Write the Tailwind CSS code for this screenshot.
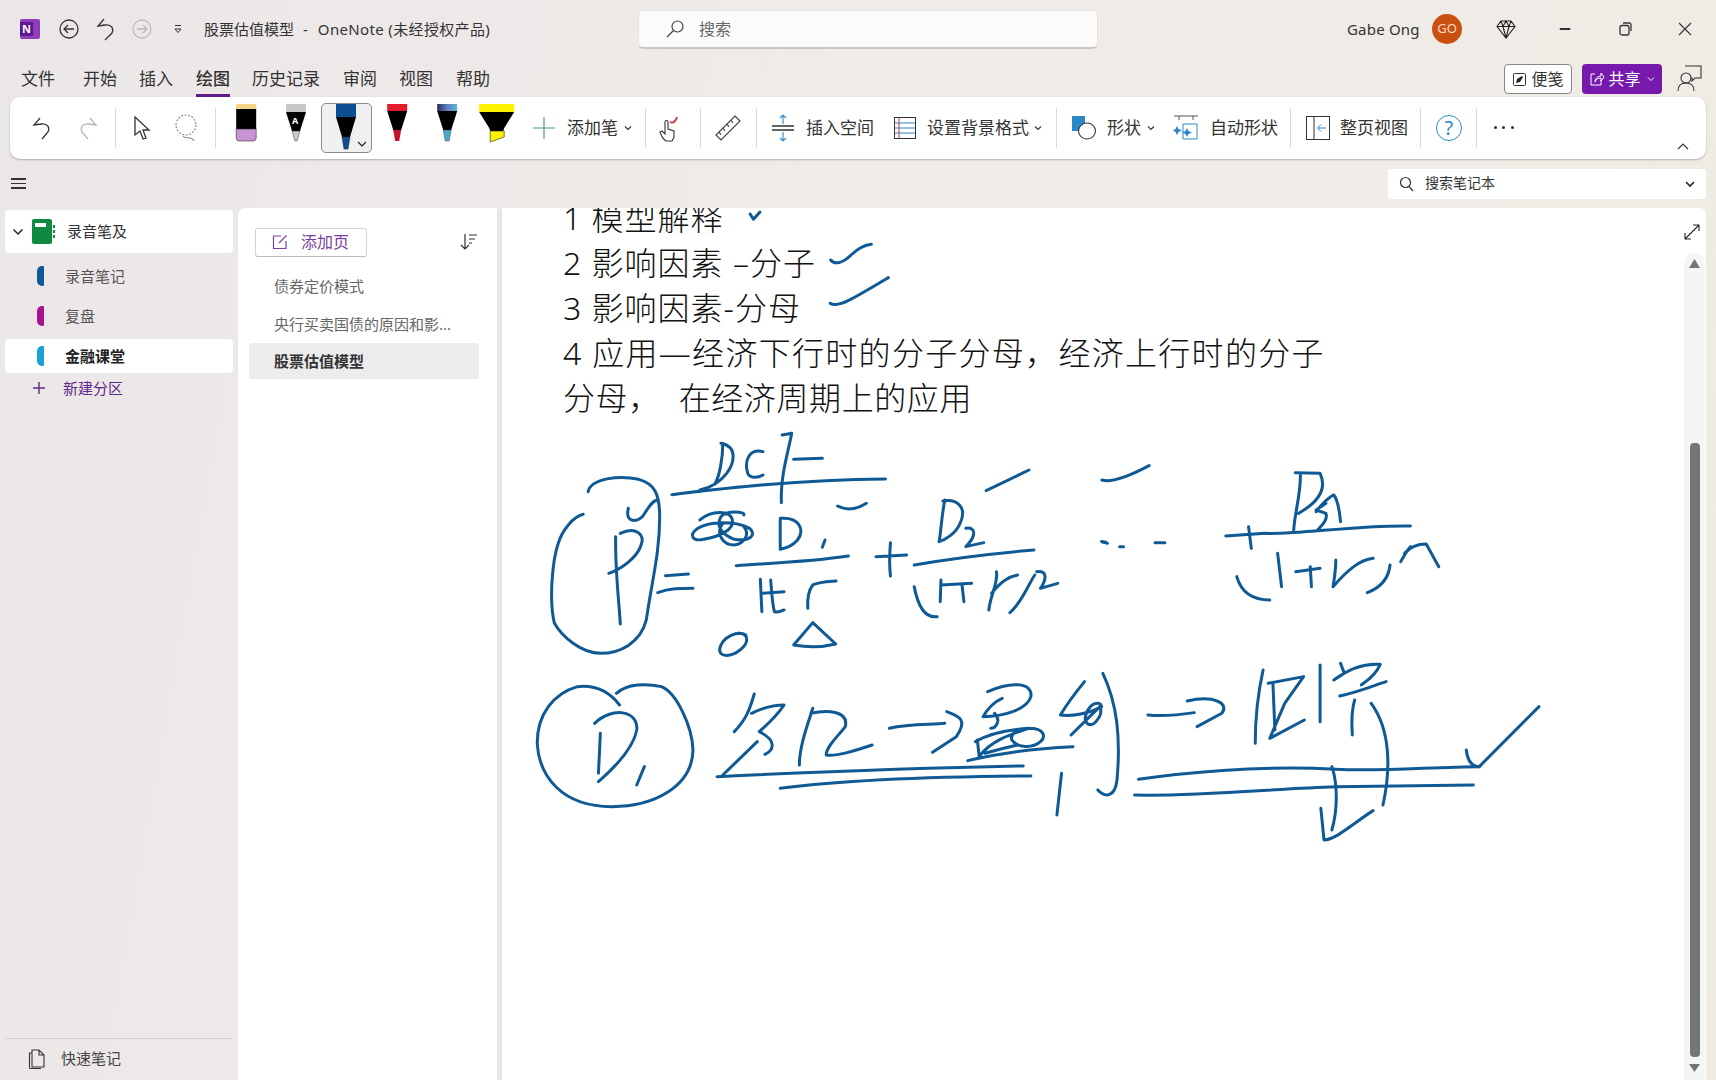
<!DOCTYPE html>
<html lang="zh-CN">
<head>
<meta charset="UTF-8">
<title>股票估值模型 - OneNote</title>
<script src="https://cdn.jsdelivr.net/npm/@tailwindcss/browser@4"></script>
</head>
<body class="m-0 overflow-hidden">
<div class="w-[1716px] h-[1080px] flex flex-col overflow-hidden text-[#333] bg-[linear-gradient(100deg,#ebe7e8_0%,#f0ebe8_45%,#efebe4_100%)] font-['Noto_Sans','Noto_Sans_CJK_SC',sans-serif]">

  <!-- title bar -->
  <div class="h-[58px] shrink-0 flex items-center">
    <div class="ml-[20px] w-[20px] h-[20px] relative bg-[#8f3dbb] rounded-[2px] shrink-0">
      <div class="absolute left-0 top-[3px] w-[13px] h-[14px] bg-[#5b1a92] text-white text-[11px] leading-[14px] font-bold text-center">N</div>
    </div>
    <svg class="ml-[19px] w-[20px] h-[20px] shrink-0" viewBox="0 0 20 20" fill="none" stroke="#333" stroke-width="1.3"><circle cx="10" cy="10" r="9"/><path d="M15 10H5M9 6l-4 4 4 4"/></svg>
    <svg class="ml-[17px] w-[20px] h-[24px] shrink-0" viewBox="0 0 20 24" fill="none" stroke="#333" stroke-width="1.3"><path d="M8 2L2 9l7-1c7-1 9 4 7 8l-7 7"/></svg>
    <svg class="ml-[16px] w-[20px] h-[20px] shrink-0" viewBox="0 0 20 20" fill="none" stroke="#bbb" stroke-width="1.3"><circle cx="10" cy="10" r="9"/><path d="M5 10h10M11 6l4 4-4 4"/></svg>
    <svg class="ml-[21px] w-[10px] h-[10px] shrink-0" viewBox="0 0 10 10" fill="none" stroke="#333" stroke-width="1"><path d="M2 1.5h6"/><path d="M2 5h6L5 8.5z"/></svg>
    <div class="ml-[21px] w-[286px] shrink-0 text-[15px] whitespace-nowrap flex">
      <span>股票估值模型</span><span class="ml-[9px]">-</span><span class="ml-[10px] tracking-[0.35px]">OneNote (未经授权产品)</span>
    </div>
    <div class="ml-[148px] w-[460px] h-[39px] shrink-0 bg-[#fbfbfb] rounded-[5px] border border-[#e5e1df] border-b-[#c9c6c4] border-b-2 flex items-center">
      <svg class="ml-[26px] w-[20px] h-[20px] shrink-0" viewBox="0 0 20 20" fill="none" stroke="#444" stroke-width="1.2"><circle cx="12.5" cy="7.5" r="5.5"/><path d="M8.5 11.5L2 18"/></svg>
      <span class="ml-[14px] text-[16px] text-[#666]">搜索</span>
    </div>
    <div class="ml-[249px] w-[74px] shrink-0 text-[15px] tracking-[0.2px] whitespace-nowrap">Gabe Ong</div>
    <div class="ml-[11px] w-[30px] h-[30px] shrink-0 rounded-full bg-[#ca5010] text-[#f5d9c8] text-[13px] flex items-center justify-center">GO</div>
    <svg class="ml-[34px] w-[20px] h-[20px] shrink-0" viewBox="0 0 20 20" fill="none" stroke="#222" stroke-width="1.1"><path d="M5 2h10l4 5.5L10 19 1 7.5zM1 7.5h18M7 7.500L10 19l3-11.500M5 2l2 5.500L10 2l3 5.500L15 2"/></svg>
    <div class="ml-[42px] w-[14px] h-[2px] bg-[#333] shrink-0 scale-x-75"></div>
    <svg class="ml-[46px] w-[14px] h-[14px] shrink-0" viewBox="0 0 14 14" fill="none" stroke="#333" stroke-width="1.300"><rect x="2" y="3.500" width="9" height="9.500" rx="2"/><path d="M5 1h5.500A2 2 0 0 1 13 3v6"/></svg>
    <svg class="ml-[46px] w-[14px] h-[14px] shrink-0" viewBox="0 0 14 14" fill="none" stroke="#333" stroke-width="1.100"><path d="M1 1l12 12M13 1L1 13"/></svg>
  </div>

  <!-- tabs -->
  <div class="h-[39px] shrink-0 flex items-start pl-[21px] pt-[7px] text-[17px] leading-[28px] whitespace-nowrap relative">
    <span>文件</span>
    <span class="ml-[28px]">开始</span>
    <span class="ml-[22px]">插入</span>
    <span class="ml-[23px] font-medium border-b-[3px] border-[#5f1c8b] h-[32px]">绘图</span>
    <span class="ml-[22px]">历史记录</span>
    <span class="ml-[23px]">审阅</span>
    <span class="ml-[22px]">视图</span>
    <span class="ml-[23px]">帮助</span>
    <div class="ml-auto flex items-start -mt-[1px]">
      <div class="w-[68px] h-[30px] bg-white border border-[#8a8886] rounded-[4px] flex items-center justify-center gap-[4px] text-[16px]">
        <svg class="w-[15px] h-[15px]" viewBox="0 0 15 15"><rect x="1.500" y="1.500" width="12" height="12" rx="1" fill="none" stroke="#333"/><path d="M4 11l1-4 5-3 1 1-3 5z" fill="#222"/></svg>便笺
      </div>
      <div class="ml-[10px] w-[80px] h-[30px] bg-[#7719aa] rounded-[4px] text-white flex items-center justify-center gap-[3px] text-[16px]">
        <svg class="w-[16px] h-[16px]" viewBox="0 0 16 16" fill="none" stroke="#fff"><path d="M6 3H2v11h10V9M6 11c0-4 3-6 6-6V2l3 4-3 4V7c-3 0-5 1-6 4z"/></svg>共享
        <svg class="w-[8px] h-[8px] ml-[3px]" viewBox="0 0 8 8" fill="none" stroke="#fff"><path d="M1 2.500l3 3 3-3"/></svg>
      </div>
      <svg class="ml-[15px] mr-[13px] w-[26px] h-[28px]" viewBox="0 0 26 28" fill="none" stroke="#333" stroke-width="1.100"><path d="M8 2h16v12h-6l-3 3v-3h-1"/><circle cx="9" cy="14" r="5"/><path d="M1 27c0-5 3-8 8-8s8 3 8 8"/></svg>
    </div>
  </div>

  <!-- ribbon -->
  <div class="ml-[10px] w-[1696px] h-[62px] shrink-0 bg-white rounded-[10px] shadow-[0_1px_2px_rgba(0,0,0,0.25)] flex items-center relative text-[17px] whitespace-nowrap">
    <svg class="ml-[11px] w-[44px] h-[24px] shrink-0" viewBox="0 0 44 24" fill="none" stroke="#333" stroke-width="1.300"><path d="M19 2l-6 7 7-1c7-1 9 4 7 8l-6 7"/></svg>
    <svg class="w-[44px] h-[24px] shrink-0" viewBox="0 0 44 24" fill="none" stroke="#b5b5b5" stroke-width="1.300"><path d="M25 2l6 7-7-1c-7-1-9 4-7 8l6 7"/></svg>
    <div class="ml-[6px] w-px h-[40px] bg-[#d8d8d8] shrink-0"></div>
    <svg class="w-[50px] h-[26px] shrink-0" viewBox="0 0 50 26" fill="none" stroke="#333" stroke-width="1.300"><path d="M19 2v18l5-4 3 8 3-1-3-8h6z"/></svg>
    <svg class="w-[42px] h-[28px] shrink-0" viewBox="0 0 42 28" fill="none" stroke="#888" stroke-width="1.200" stroke-dasharray="2 1.500"><circle cx="20" cy="11" r="10"/><path d="M17 22c3 4 8-1 11 5" stroke-dasharray="none"/></svg>
    <div class="ml-[7px] w-px h-[40px] bg-[#d8d8d8] shrink-0"></div>

    <!-- pens -->
    <svg class="ml-[4.500px] w-[50.400px] h-[50px] shrink-0" viewBox="0 0 50 50"><rect x="15" y="1" width="20" height="6" fill="#f3d488"/><rect x="15" y="6" width="20" height="20" fill="#000"/><path d="M15 26h20v9a3 3 0 0 1-3 3H18a3 3 0 0 1-3-3z" fill="#c994d6" stroke="#333" stroke-width=".6"/></svg>
    <div class="w-[50.400px] h-[50px] shrink-0 relative">
      <svg class="w-[50px] h-[50px]" viewBox="0 0 50 50"><rect x="15" y="1" width="20" height="8" fill="#c9c7c7"/><path d="M15 9h20l-6 19h-8z" fill="#000"/><path d="M21 28h8l-3 10h-2z" fill="#c9c7c7" stroke="#333" stroke-width=".5"/></svg>
      <span class="absolute left-[21px] top-[13px] text-white text-[9px] leading-[10px] font-bold">A</span>
    </div>
    <div class="w-[50.400px] h-[50px] shrink-0 relative bg-[#f0f0f0] border border-[#8a8a8a] rounded-[5px] overflow-hidden">
      <svg class="absolute left-[-1px] top-[-1px] w-[50px] h-[50px]" viewBox="0 0 50 50"><rect x="15" y="1" width="20" height="13" fill="#0b4f92"/><path d="M15 14h20l-6 20h-8z" fill="#000"/><path d="M21 34h8l-2 12h-4z" fill="#0b4f92" stroke="#222" stroke-width=".5"/></svg>
      <svg class="absolute right-[4px] bottom-[4px] w-[10px] h-[8px]" viewBox="0 0 10 8" fill="none" stroke="#222" stroke-width="1.200"><path d="M1 2l4 4 4-4"/></svg>
    </div>
    <svg class="w-[50.400px] h-[50px] shrink-0" viewBox="0 0 50 50"><rect x="15" y="1" width="20" height="7" fill="#e21b2b"/><path d="M15 8h20l-6 19h-8z" fill="#000"/><path d="M21 27h8l-2 11h-4z" fill="#c8102e"/></svg>
    <svg class="w-[50.400px] h-[50px] shrink-0" viewBox="0 0 50 50"><defs><linearGradient id="cap" x1="0" x2="1"><stop offset="0" stop-color="#2a2a55"/><stop offset=".5" stop-color="#5b7fc4"/><stop offset="1" stop-color="#5fb7cf"/></linearGradient></defs><rect x="15" y="1" width="20" height="7" fill="url(#cap)"/><path d="M15 8h20l-6 19h-8z" fill="#000"/><path d="M21 27h8l-2 11h-4z" fill="#4ea9c8" stroke="#333" stroke-width=".4"/></svg>
    <svg class="w-[50.400px] h-[50px] shrink-0" viewBox="0 0 50 50"><rect x="7" y="1" width="35" height="8" fill="#fff200"/><path d="M7 9h35l-10 16-1 3h-13l-1-3z" fill="#000"/><path d="M18 28h14v6l-14 5z" fill="#fff200" stroke="#222" stroke-width=".6"/></svg>

    <svg class="ml-[10.100px] w-[22px] h-[22px] shrink-0" viewBox="0 0 22 22" stroke="#4ba36b" stroke-width="1.200"><path d="M11 0v22M0 11h22"/></svg>
    <span class="ml-[12px] w-[51px] shrink-0">添加笔</span>
    <svg class="ml-[6px] w-[8px] h-[8px] shrink-0" viewBox="0 0 8 8" fill="none" stroke="#333" stroke-width="1.100"><path d="M1 2.500l3 3 3-3"/></svg>
    <div class="ml-[13px] w-px h-[40px] bg-[#d8d8d8] shrink-0"></div>
    <svg class="w-[48px] h-[28px] shrink-0" viewBox="0 0 48 28" fill="none"><path d="M20 27c-3-2-5-6-6-9l2-1 3 3V8a1.500 1.500 0 0 1 3 0v7l6 2v6l-2 4z" stroke="#333" stroke-width="1.100"/><path d="M24 8c3 2 6-1 7-5" stroke="#c8323c" stroke-width="1.800"/></svg>
    <div class="ml-[6px] w-px h-[40px] bg-[#d8d8d8] shrink-0"></div>
    <svg class="w-[55px] h-[26px] shrink-0" viewBox="0 0 55 26" fill="none" stroke="#444" stroke-width="1.200"><path d="M34 1l5 5-19 19-5-5zM30 5l2 3M26 9l2 3M22 13l2 3M18 17l2 3"/></svg>
    <div class="w-px h-[40px] bg-[#d8d8d8] shrink-0"></div>
    <svg class="ml-[6px] w-[40px] h-[28px] shrink-0" viewBox="0 0 40 28" fill="none"><path d="M9 12h22M9 16h22" stroke="#333" stroke-width="1.600"/><path d="M20 10V1M17 4l3-3 3 3M20 18v9M17 24l3 3 3-3" stroke="#2b88c8" stroke-width="1.100"/></svg>
    <span class="ml-[3px] w-[68px] shrink-0">插入空间</span>
    <svg class="ml-[19px] w-[24px] h-[24px] shrink-0" viewBox="0 0 24 24" fill="none"><rect x="1.500" y="1.500" width="21" height="21" stroke="#333"/><path d="M2 7h20M2 12h20M2 17h20" stroke="#2b88c8"/><path d="M6 2v20" stroke="#c8323c"/></svg>
    <span class="ml-[10px] w-[102px] shrink-0">设置背景格式</span>
    <svg class="ml-[5px] w-[8px] h-[8px] shrink-0" viewBox="0 0 8 8" fill="none" stroke="#333" stroke-width="1.100"><path d="M1 2.500l3 3 3-3"/></svg>
    <div class="ml-[14px] w-px h-[40px] bg-[#d8d8d8] shrink-0"></div>
    <svg class="ml-[14px] w-[26px] h-[26px] shrink-0" viewBox="0 0 26 26" fill="none"><rect x="1" y="1" width="13" height="15" fill="#2b88c8"/><ellipse cx="16" cy="16" rx="8.500" ry="8" fill="#fff" stroke="#333" stroke-width="1.100"/></svg>
    <span class="ml-[10px] w-[34px] shrink-0">形状</span>
    <svg class="ml-[6px] w-[8px] h-[8px] shrink-0" viewBox="0 0 8 8" fill="none" stroke="#333" stroke-width="1.100"><path d="M1 2.500l3 3 3-3"/></svg>
    <svg class="ml-[18px] w-[26px] h-[26px] shrink-0" viewBox="0 0 26 26" fill="none"><path d="M1 1h24" stroke="#555"/><path d="M6 1v4M20 1v4" stroke="#555"/><path d="M10 9h14v15H10z" stroke="#2b88c8"/><path d="M4 11l1.500 3L9 15.500 5.500 17 4 20l-1.500-3L0 15.500 2.500 14zM14 13l1.500 3 3.500 1.500-3.500 1.500-1.500 3-1.500-3L9 17.500l3.500-1.500z" fill="#2b88c8"/></svg>
    <span class="ml-[11px] w-[68px] shrink-0">自动形状</span>
    <div class="ml-[12px] w-px h-[40px] bg-[#d8d8d8] shrink-0"></div>
    <svg class="ml-[15px] w-[24px] h-[24px] shrink-0" viewBox="0 0 24 24" fill="none"><rect x=".500" y=".500" width="23" height="23" stroke="#333"/><path d="M8 1v22" stroke="#333"/><path d="M20 12h-8M15 8.500L11.500 12l3.500 3.500" stroke="#2b88c8"/></svg>
    <span class="ml-[10px] w-[68px] shrink-0">整页视图</span>
    <div class="ml-[12px] w-px h-[40px] bg-[#d8d8d8] shrink-0"></div>
    <div class="ml-[15px] w-[26px] h-[26px] shrink-0 rounded-full border border-[#2b88c8] text-[#2b88c8] text-[20px] leading-[24px] text-center">?</div>
    <div class="ml-[14px] w-px h-[40px] bg-[#d8d8d8] shrink-0"></div>
    <div class="ml-[17px] w-[20px] shrink-0 flex justify-between -mt-[2px]">
      <i class="w-[3px] h-[3px] rounded-full bg-[#333]"></i><i class="w-[3px] h-[3px] rounded-full bg-[#333]"></i><i class="w-[3px] h-[3px] rounded-full bg-[#333]"></i>
    </div>
    <svg class="absolute right-[17px] bottom-[9px] w-[12px] h-[8px]" viewBox="0 0 12 8" fill="none" stroke="#333" stroke-width="1.100"><path d="M1 7l5-5 5 5"/></svg>
  </div>

  <!-- notebook search row -->
  <div class="h-[49px] shrink-0 flex items-center">
    <div class="ml-[11px] w-[15px] flex flex-col gap-[3px] shrink-0">
      <i class="h-[1.500px] bg-[#333]"></i><i class="h-[1.500px] bg-[#333]"></i><i class="h-[1.500px] bg-[#333]"></i>
    </div>
    <div class="ml-auto mr-[10px] w-[318px] h-[30px] bg-white rounded-[3px] flex items-center text-[14px]">
      <svg class="ml-[11px] w-[15px] h-[16px] shrink-0" viewBox="0 0 15 16" fill="none" stroke="#333" stroke-width="1.200"><circle cx="6.500" cy="6.500" r="5"/><path d="M10 10.500l4 4.500"/></svg>
      <span class="ml-[11px] -mt-[2px]">搜索笔记本</span>
      <svg class="ml-auto mr-[11px] w-[10px] h-[8px] shrink-0" viewBox="0 0 10 8" fill="none" stroke="#222" stroke-width="1.600"><path d="M1 2l4 4 4-4"/></svg>
    </div>
  </div>

  <!-- main -->
  <div class="flex-1 min-h-0 flex">
    <!-- sections -->
    <div class="w-[238px] shrink-0 flex flex-col text-[15px] pt-[2px]">
      <div class="ml-[5px] w-[228px] h-[43px] bg-white rounded-[4px] flex items-center">
        <svg class="ml-[7px] w-[12px] h-[8px] shrink-0" viewBox="0 0 12 8" fill="none" stroke="#222" stroke-width="1.500"><path d="M1.500 1.500L6 6l4.500-4.500"/></svg>
        <div class="ml-[8px] w-[23px] h-[25px] shrink-0 flex">
          <div class="w-[20px] h-[25px] bg-[#0e8a43] rounded-[2px] pt-[4px] pl-[3px]"><div class="w-[11px] h-[4px] bg-white"></div></div>
          <div class="ml-[1px] flex flex-col justify-center gap-[2px]"><i class="w-[2px] h-[3px] bg-[#0e8a43]"></i><i class="w-[2px] h-[3px] bg-[#0e8a43]"></i><i class="w-[2px] h-[3px] bg-[#0e8a43]"></i></div>
        </div>
        <span class="ml-[12px]">录音笔及</span>
      </div>
      <div class="mt-[3px] h-[40px] flex items-center">
        <div class="ml-[37px] w-[7px] h-[20px] bg-[#0f5a94] rounded-l-[5px] rounded-r-[1px] shrink-0"></div>
        <span class="ml-[21px] text-[#555]">录音笔记</span>
      </div>
      <div class="h-[40px] flex items-center">
        <div class="ml-[37px] w-[7px] h-[20px] bg-[#a6128f] rounded-l-[5px] rounded-r-[1px] shrink-0"></div>
        <span class="ml-[21px] text-[#555]">复盘</span>
      </div>
      <div class="mt-[3px] ml-[5px] w-[228px] h-[34px] bg-white rounded-[4px] flex items-center">
        <div class="ml-[32px] w-[7px] h-[20px] bg-[#1ba1d6] rounded-l-[5px] rounded-r-[1px] shrink-0"></div>
        <span class="ml-[21px] font-bold text-[#222]">金融课堂</span>
      </div>
      <div class="h-[30px] flex items-center text-[#5f2a8a]">
        <svg class="ml-[33px] w-[12px] h-[12px] shrink-0" viewBox="0 0 12 12" stroke="#5f2a8a" stroke-width="1.400"><path d="M6 0v12M0 6h12"/></svg>
        <span class="ml-[18px]">新建分区</span>
      </div>
      <div class="mt-auto mx-[5px] border-t border-[#d2cfcf] h-[42px] pb-[2px] flex items-center text-[#444]">
        <svg class="ml-[22px] w-[18px] h-[20px] shrink-0" viewBox="0 0 18 20" fill="none" stroke="#333" stroke-width="1.100"><path d="M5 1h7l5 5v12H5zM12 1v5h5M5 4H2.500v14.500A1 1 0 0 0 3.500 19.500H14"/></svg>
        <span class="ml-[16px]">快速笔记</span>
      </div>
    </div>

    <!-- pages -->
    <div class="w-[259px] shrink-0 bg-white rounded-tl-[8px] text-[15px]">
      <div class="h-[64px] flex items-center pt-[4px]">
        <div class="ml-[17px] w-[112px] h-[29px] bg-white rounded-[3px] border border-[#d5d3d1] border-b-[#bbb] flex items-center text-[#7a3f9e] text-[16px]">
          <svg class="ml-[16px] w-[16px] h-[16px] shrink-0" viewBox="0 0 16 16" fill="none" stroke="#7a3f9e" stroke-width="1.200"><path d="M9 2H1.500v12.500H14V7M14.500 1.500L7 9"/></svg>
          <span class="ml-[13px]">添加页</span>
        </div>
        <svg class="ml-[93px] w-[18px] h-[18px] shrink-0" viewBox="0 0 18 18" fill="none" stroke="#333" stroke-width="1.200"><path d="M5 1v15M1 12l4 4 4-4M9 2h8M9 6h6M9 10h3"/></svg>
      </div>
      <div class="-mt-[1px] h-[30px] pl-[36px] flex items-center text-[#666] whitespace-nowrap">债券定价模式</div>
      <div class="mt-[8px] h-[30px] pl-[36px] flex items-center text-[#666] whitespace-nowrap">央行买卖国债的原因和影...</div>
      <div class="mt-[4px] ml-[11px] w-[230px] h-[36px] bg-[#ececec] rounded-[3px] pl-[25px] flex items-center font-bold text-[#333]">股票估值模型</div>
    </div>
    <div class="mt-[4px] w-[5px] shrink-0 bg-[#e6e6e6]"></div>

    <!-- note canvas -->
    <div class="w-[1204px] shrink-0 bg-white rounded-tr-[6px] relative overflow-hidden">
      <div class="-mt-[13px] pl-[61px] pr-[280px] text-[32px] leading-[45px] text-[#111] font-light tracking-[1px]">
        <div>1 模型解释</div>
        <div>2 影响因素 –分子</div>
        <div>3 影响因素-分母</div>
        <div class="tracking-[1.300px]">4 应用—经济下行时的分子分母，经济上行时的分子</div>
        <div class="whitespace-pre tracking-[0.600px]">分母，  在经济周期上的应用</div>
      </div>

      <!-- ink, in page coordinates -->
      <svg class="absolute left-[-502px] top-[-208px] w-[1716px] h-[1080px] pointer-events-none" viewBox="0 0 1716 1080" fill="none" stroke="#0f5a94" stroke-linecap="round" stroke-linejoin="round">
        <g transform="translate(500 200) scale(.5485 .3333)" stroke-width="3">
          <path vector-effect="non-scaling-stroke" d="M456 42L462 58L474 36"/>
          <path vector-effect="non-scaling-stroke" d="M603 180C610 195 625 190 640 165C650 150 665 135 677 133"/>
          <path vector-effect="non-scaling-stroke" d="M602 310C615 325 640 300 708 233"/>
        </g>
        <g transform="translate(520 420) scale(.3827 .3333)" stroke-width="3">
          <path vector-effect="non-scaling-stroke" d="M178 215C185 175 260 165 310 178C350 190 365 220 365 290C365 400 345 480 330 600C315 670 260 700 210 700C160 700 110 650 90 610C75 540 85 420 100 370C110 330 140 290 165 283"/>
          <path vector-effect="non-scaling-stroke" d="M283 265C275 305 300 310 320 290C335 265 345 240 360 240"/>
          <path vector-effect="non-scaling-stroke" d="M250 350C248 450 260 560 262 612"/>
          <path vector-effect="non-scaling-stroke" d="M262 340C300 320 330 340 315 380C305 410 270 445 232 460"/>
          <path vector-effect="non-scaling-stroke" d="M380 467L440 462M360 518C390 505 420 505 452 505"/>
          <path vector-effect="non-scaling-stroke" d="M397 224C500 210 700 180 955 177"/>
          <path vector-effect="non-scaling-stroke" d="M530 70C530 120 520 170 510 190M525 70C570 80 560 130 540 160C520 190 490 205 470 210"/>
          <path vector-effect="non-scaling-stroke" d="M635 95C600 85 585 120 595 160C600 175 620 175 635 165"/>
          <path vector-effect="non-scaling-stroke" d="M685 45L710 40C700 100 680 170 683 248M715 118L790 115"/>
          <path vector-effect="non-scaling-stroke" d="M470 300C500 270 550 270 555 300C560 330 520 350 480 358C450 365 440 345 465 325C490 305 560 300 600 325C620 345 600 365 560 358C530 345 510 320 525 290C540 270 590 275 585 285M530 310C510 340 530 375 560 375C590 370 600 340 585 320"/>
          <path vector-effect="non-scaling-stroke" d="M680 300L680 385M680 295C730 290 745 330 725 360C710 380 695 385 680 388M797 360L790 382"/>
          <path vector-effect="non-scaling-stroke" d="M830 258C860 275 885 265 905 250"/>
          <path vector-effect="non-scaling-stroke" d="M565 437C650 430 760 425 858 408"/>
          <path vector-effect="non-scaling-stroke" d="M628 478L632 575M655 480C658 520 660 560 665 575C670 578 680 575 690 570M635 520L690 515"/>
          <path vector-effect="non-scaling-stroke" d="M752 565C750 530 755 510 765 495C785 485 805 485 826 483"/>
          <path vector-effect="non-scaling-stroke" d="M590 645C570 630 530 650 522 685C518 715 555 710 575 690C598 670 600 640 570 640"/>
          <path vector-effect="non-scaling-stroke" d="M765 608L715 675C750 682 790 682 825 672Z"/>
          <path vector-effect="non-scaling-stroke" d="M930 410L1010 405M968 368C965 410 965 440 968 468"/>
          <path vector-effect="non-scaling-stroke" d="M1110 240C1100 300 1100 340 1095 365M1105 243C1140 235 1170 260 1150 310C1140 340 1110 360 1095 365"/>
          <path vector-effect="non-scaling-stroke" d="M1165 325C1190 320 1195 345 1165 380L1212 368"/>
          <path vector-effect="non-scaling-stroke" d="M1030 435C1130 415 1240 400 1343 390"/>
          <path vector-effect="non-scaling-stroke" d="M1030 500C1040 560 1060 595 1090 590M1100 480L1098 545M1100 495L1180 490M1155 495L1160 545"/>
          <path vector-effect="non-scaling-stroke" d="M1225 570C1230 520 1250 490 1245 455M1232 520C1260 480 1280 470 1300 465"/>
          <path vector-effect="non-scaling-stroke" d="M1280 578C1310 550 1330 490 1345 465M1350 455C1380 450 1375 480 1360 505L1405 490"/>
          <path vector-effect="non-scaling-stroke" d="M1218 212L1330 150M1520 365L1535 370"/>
          <path vector-effect="non-scaling-stroke" d="M260 855C230 810 190 795 150 800C90 820 45 880 45 970C50 1070 110 1160 240 1160C350 1160 450 1100 452 990C450 920 410 820 370 800C330 790 280 790 252 820"/>
          <path vector-effect="non-scaling-stroke" d="M210 940L205 1060M195 910C240 860 310 870 305 930C295 990 240 1050 205 1085M325 1040L305 1095"/>
          <path vector-effect="non-scaling-stroke" d="M612 822C600 870 590 900 560 935M605 880C640 860 670 855 690 855C670 890 640 920 625 935C670 960 665 990 640 1003M620 965L530 1065"/>
          <path vector-effect="non-scaling-stroke" d="M765 865C750 920 730 980 730 1035M760 880C800 870 860 870 850 920C830 950 800 980 800 1005C830 1010 880 990 920 975"/>
          <path vector-effect="non-scaling-stroke" d="M965 925C1020 910 1080 915 1110 910M1115 875C1150 890 1170 900 1140 950L1078 997"/>
          <path vector-effect="non-scaling-stroke" d="M1222 815C1280 785 1340 785 1335 830C1325 870 1260 890 1210 890C1230 850 1250 840 1260 835M1240 880C1260 905 1240 925 1230 925"/>
          <path vector-effect="non-scaling-stroke" d="M1195 960L1200 1010C1230 960 1290 940 1330 925C1370 925 1375 950 1360 965C1340 985 1300 985 1285 960C1280 940 1300 925 1330 925M1190 965C1220 945 1270 930 1330 925M1215 1000C1260 985 1280 980 1300 975"/>
          <path vector-effect="non-scaling-stroke" d="M1170 1022C1250 1000 1350 985 1445 980"/>
          <path vector-effect="non-scaling-stroke" d="M1475 785C1450 820 1420 870 1412 885C1440 890 1490 880 1520 860C1515 840 1490 850 1480 880C1470 910 1490 925 1505 905C1520 885 1520 870 1515 860L1440 945"/>
          <path vector-effect="non-scaling-stroke" d="M1523 760C1560 850 1570 950 1560 1080C1555 1130 1530 1135 1510 1110M1415 1060L1403 1185"/>
          <path vector-effect="non-scaling-stroke" d="M515 1070C700 1060 1000 1045 1315 1038M680 1105C850 1080 1100 1070 1335 1068"/>
        </g>
        <g transform="translate(1100 420) scale(.393 .3333)" stroke-width="3">
          <path vector-effect="non-scaling-stroke" d="M5 180C30 190 80 165 125 137M5 365L15 367M50 380L60 380M140 368L165 368"/>
          <path vector-effect="non-scaling-stroke" d="M320 348L420 340C500 345 650 315 790 318M378 320L385 385"/>
          <path vector-effect="non-scaling-stroke" d="M510 165C510 230 495 280 493 330M497 158L560 160C580 210 550 250 505 280"/>
          <path vector-effect="non-scaling-stroke" d="M550 275C565 250 590 225 595 225C605 240 610 280 612 305M575 250L550 270L575 280C580 300 565 315 555 328"/>
          <path vector-effect="non-scaling-stroke" d="M348 470C360 520 390 540 432 540M452 400L462 500M498 455L560 445M535 440L538 500"/>
          <path vector-effect="non-scaling-stroke" d="M593 500C597 470 600 450 600 420M593 500C630 450 660 420 695 415M680 518C720 500 735 470 738 435"/>
          <path vector-effect="non-scaling-stroke" d="M765 425C775 405 785 385 790 380M775 400C790 380 810 372 830 372L862 440"/>
          <path vector-effect="non-scaling-stroke" d="M122 885C160 890 200 885 240 878M222 843C290 825 330 850 310 880L247 920"/>
          <path vector-effect="non-scaling-stroke" d="M415 750C400 830 395 900 395 970M428 790L518 770L470 850L432 955L520 900M440 790L445 930M560 735L560 905"/>
          <path vector-effect="non-scaling-stroke" d="M612 730L620 755M595 780C640 740 680 730 713 733C700 770 670 790 665 795M610 828C660 815 700 795 728 785M648 840C640 870 640 910 642 945"/>
          <path vector-effect="non-scaling-stroke" d="M690 850C740 930 740 1050 720 1155"/>
          <path vector-effect="non-scaling-stroke" d="M98 1078C200 1060 400 1035 600 1048C720 1055 850 1040 965 1040M88 1125C250 1130 450 1105 600 1100L950 1095"/>
          <path vector-effect="non-scaling-stroke" d="M590 1040C605 1090 605 1170 590 1230M562 1165L570 1260C600 1260 650 1205 695 1172"/>
          <path vector-effect="non-scaling-stroke" d="M932 990C935 1020 945 1040 965 1040L1117 860"/>
        </g>
      </svg>

      <!-- canvas controls and scrollbar -->
      <svg class="absolute right-[6px] top-[16px] w-[16px] h-[16px]" viewBox="0 0 16 16" fill="none" stroke="#222" stroke-width="1.100"><path d="M1 15L15 1M9 1h6v6M1 9v6h6"/></svg>
      <div class="absolute right-[1px] top-[45px] bottom-0 w-[21px] bg-[#f5f5f6] rounded-t-[10px] flex flex-col items-center">
        <svg class="mt-[6px] w-[11px] h-[9px] shrink-0" viewBox="0 0 11 9" fill="#757575"><path d="M5.500 0L11 9H0z"/></svg>
        <div class="mt-[175px] w-[10px] h-[614px] bg-[#757575] rounded-[4px] shrink-0"></div>
        <svg class="mt-[7px] w-[11px] h-[8px] shrink-0" viewBox="0 0 11 8" fill="#757575"><path d="M0 0h11L5.500 8z"/></svg>
      </div>
    </div>
  </div>
</div>
</body>
</html>
